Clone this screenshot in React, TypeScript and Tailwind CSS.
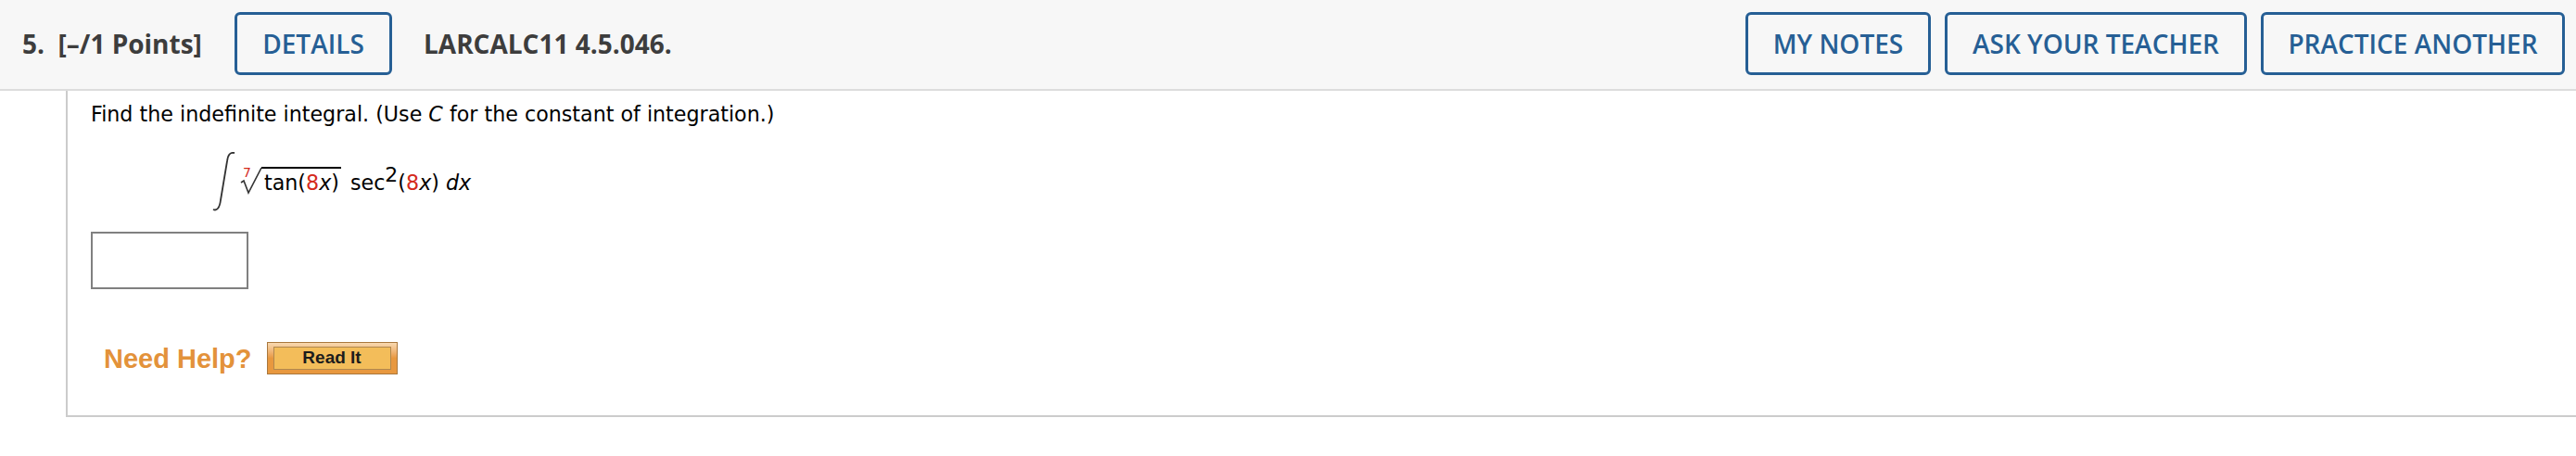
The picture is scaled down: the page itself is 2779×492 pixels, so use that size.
const OutlineButton: React.FC<{ label: string; width: string }> = ({ label, width }) => (
    <button className={`${width} h-[68px] flex items-center justify-center rounded-[6px] border-[3px] border-[#265f95] text-[#265f95] text-[28px] font-semibold`}>
        {label}
    </button>
);

const Red: React.FC<{ children: React.ReactNode }> = ({ children }) => (
    <span className="text-[#d42a1c]">{children}</span>
);

export default function App() {
    return (
        <div className="w-[2779px] h-[492px] bg-white overflow-hidden">
            {/* HEADER */}
            <div className="h-[98px] bg-[#f7f7f7] border-b-[2px] border-[#dcdcdc] flex items-center justify-between pl-[24px] pr-[12px] font-['Open_Sans',sans-serif] pb-[2px]">
                <div className="flex items-center text-[#3d3d3d] text-[28px] font-bold">
                    <span className="w-[229px]">5.&nbsp; [–/1 Points]</span>
                    <OutlineButton label="DETAILS" width="w-[170px]" />
                    <span className="ml-[34px]">LARCALC11 4.5.046.</span>
                </div>
                <div className="flex items-center gap-[15px]">
                    <OutlineButton label="MY NOTES" width="w-[200px]" />
                    <OutlineButton label="ASK YOUR TEACHER" width="w-[326px]" />
                    <OutlineButton label="PRACTICE ANOTHER" width="w-[328px]" />
                </div>
            </div>

            {/* QUESTION */}
            <div className="ml-[71px] h-[352px] border-l-[2px] border-b-[2px] border-[#cccccc] pl-[25px] pt-[11px] font-['DejaVu_Sans',sans-serif] text-[22.2px] text-black">
                <p className="leading-[28px]">
                    Find the indefinite integral. (Use <i>C</i> for the constant of integration.)
                </p>

                <div className="ml-[131px] mt-[27px] h-[64px] flex items-start">
                    <svg width="30" height="64" viewBox="0 0 30 64" className="shrink-0">
                        <path d="M1 62 C5 64 8 60 9 52 L16 10 C17 3 19 0 24 1" fill="none" stroke="#333" strokeWidth="1.8" />
                    </svg>
                    <span className="relative w-[23px] h-[30px] mt-[16px] shrink-0">
                        <span className="absolute left-[3px] top-[-3px] text-[14px] leading-[18px] text-[#d42a1c]">7</span>
                        <svg width="23" height="30" viewBox="0 0 23 30" className="absolute left-0 top-0">
                            <path d="M1 17 L4 15 L9 28 L23 1" fill="none" stroke="#333" strokeWidth="1.6" />
                        </svg>
                    </span>
                    <span className="mt-[16px] border-t-[2px] border-black leading-[30px] pl-[3px] pr-[2px]">
                        tan(<Red>8</Red><i>x</i>)
                    </span>
                    <span className="ml-[10px] mt-[18px] leading-[30px]">
                        sec<sup className="text-[22px] top-[-9px]">2</sup>(<Red>8</Red><i>x</i>) <i>dx</i>
                    </span>
                </div>

                <input
                    type="text"
                    className="block mt-[22px] w-[170px] h-[62px] border-[2px] border-[#808080] bg-white"
                />

                <div className="flex items-center ml-[14px] mt-[57px]">
                    <span className="font-['Liberation_Sans',sans-serif] font-bold text-[29px] text-[#e3923a] leading-[34px]">Need Help?</span>
                    <button className="ml-[16px] w-[141px] h-[35px] border-[1px] border-[#a9773d] bg-gradient-to-b from-[#f8d9b0] via-[#e8983f] to-[#e8983f] px-[6px] pt-[4px] pb-[4px] flex">
                        <span className="w-full h-full border-[1px] border-[#b08850] bg-[#f3bd5a] flex items-center justify-center font-['Liberation_Sans',sans-serif] font-bold text-[19px] text-[#1c1c1c]">
                            Read It
                        </span>
                    </button>
                </div>
            </div>
        </div>
    );
}
